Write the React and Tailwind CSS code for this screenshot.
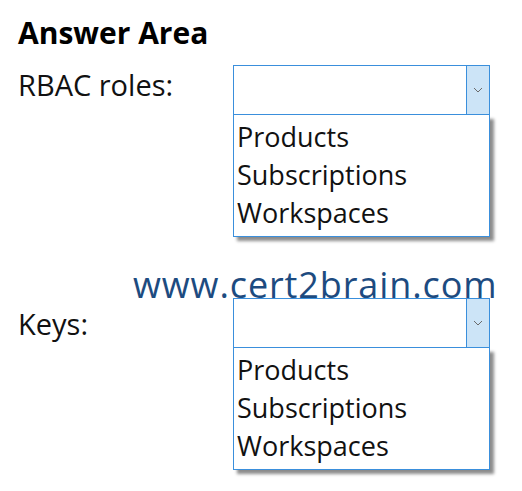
import React from 'react'

const OPTIONS = ['Products', 'Subscriptions', 'Workspaces']

function Dropdown() {
  return (
    <div className="w-[257px]">
      <div className="flex h-[50px] border border-[#3a8fdc] bg-white">
        <div className="flex-1" />
        <div className="w-[23px] flex items-center justify-center bg-[#cce4f7] border-l border-[#3a8fdc]">
          <svg width="10" height="6" viewBox="0 0 10 6" fill="none">
            <path d="M1 1l4 4 4-4" stroke="#6b6b6b" strokeWidth="1" />
          </svg>
        </div>
      </div>
      <div className="border border-t-0 border-[#3a8fdc] bg-white pl-[3px] pt-[3px] pb-[4px] shadow-[4px_4px_3px_rgba(0,0,0,0.45)]">
        {OPTIONS.map(o => (
          <div key={o} className="h-[38px] leading-[38px] text-[27px] text-[#111] whitespace-nowrap">{o}</div>
        ))}
      </div>
    </div>
  )
}

export default function App() {
  return (
    <div className="relative w-[522px] h-[491px] bg-white overflow-hidden" style={{ fontFamily: '"Open Sans", sans-serif' }}>
      <div className="pl-[18px] pt-[15px]">
        <h1 className="text-[30px] leading-[36px] font-bold text-black">Answer Area</h1>
        <div className="flex mt-[14px]">
          <div className="w-[215px] text-[29px] leading-[40px] text-[#111]">RBAC roles:</div>
          <Dropdown />
        </div>
        <div className="flex mt-[61px]">
          <div className="w-[215px] text-[29px] leading-[40px] pt-[6px] text-[#111]">Keys:</div>
          <Dropdown />
        </div>
      </div>
      <div className="absolute left-[133px] top-[263px] text-[36px] leading-[44px] text-[#1d4b80] tracking-[0.9px]">
        www.cert2brain.com
      </div>
    </div>
  )
}
